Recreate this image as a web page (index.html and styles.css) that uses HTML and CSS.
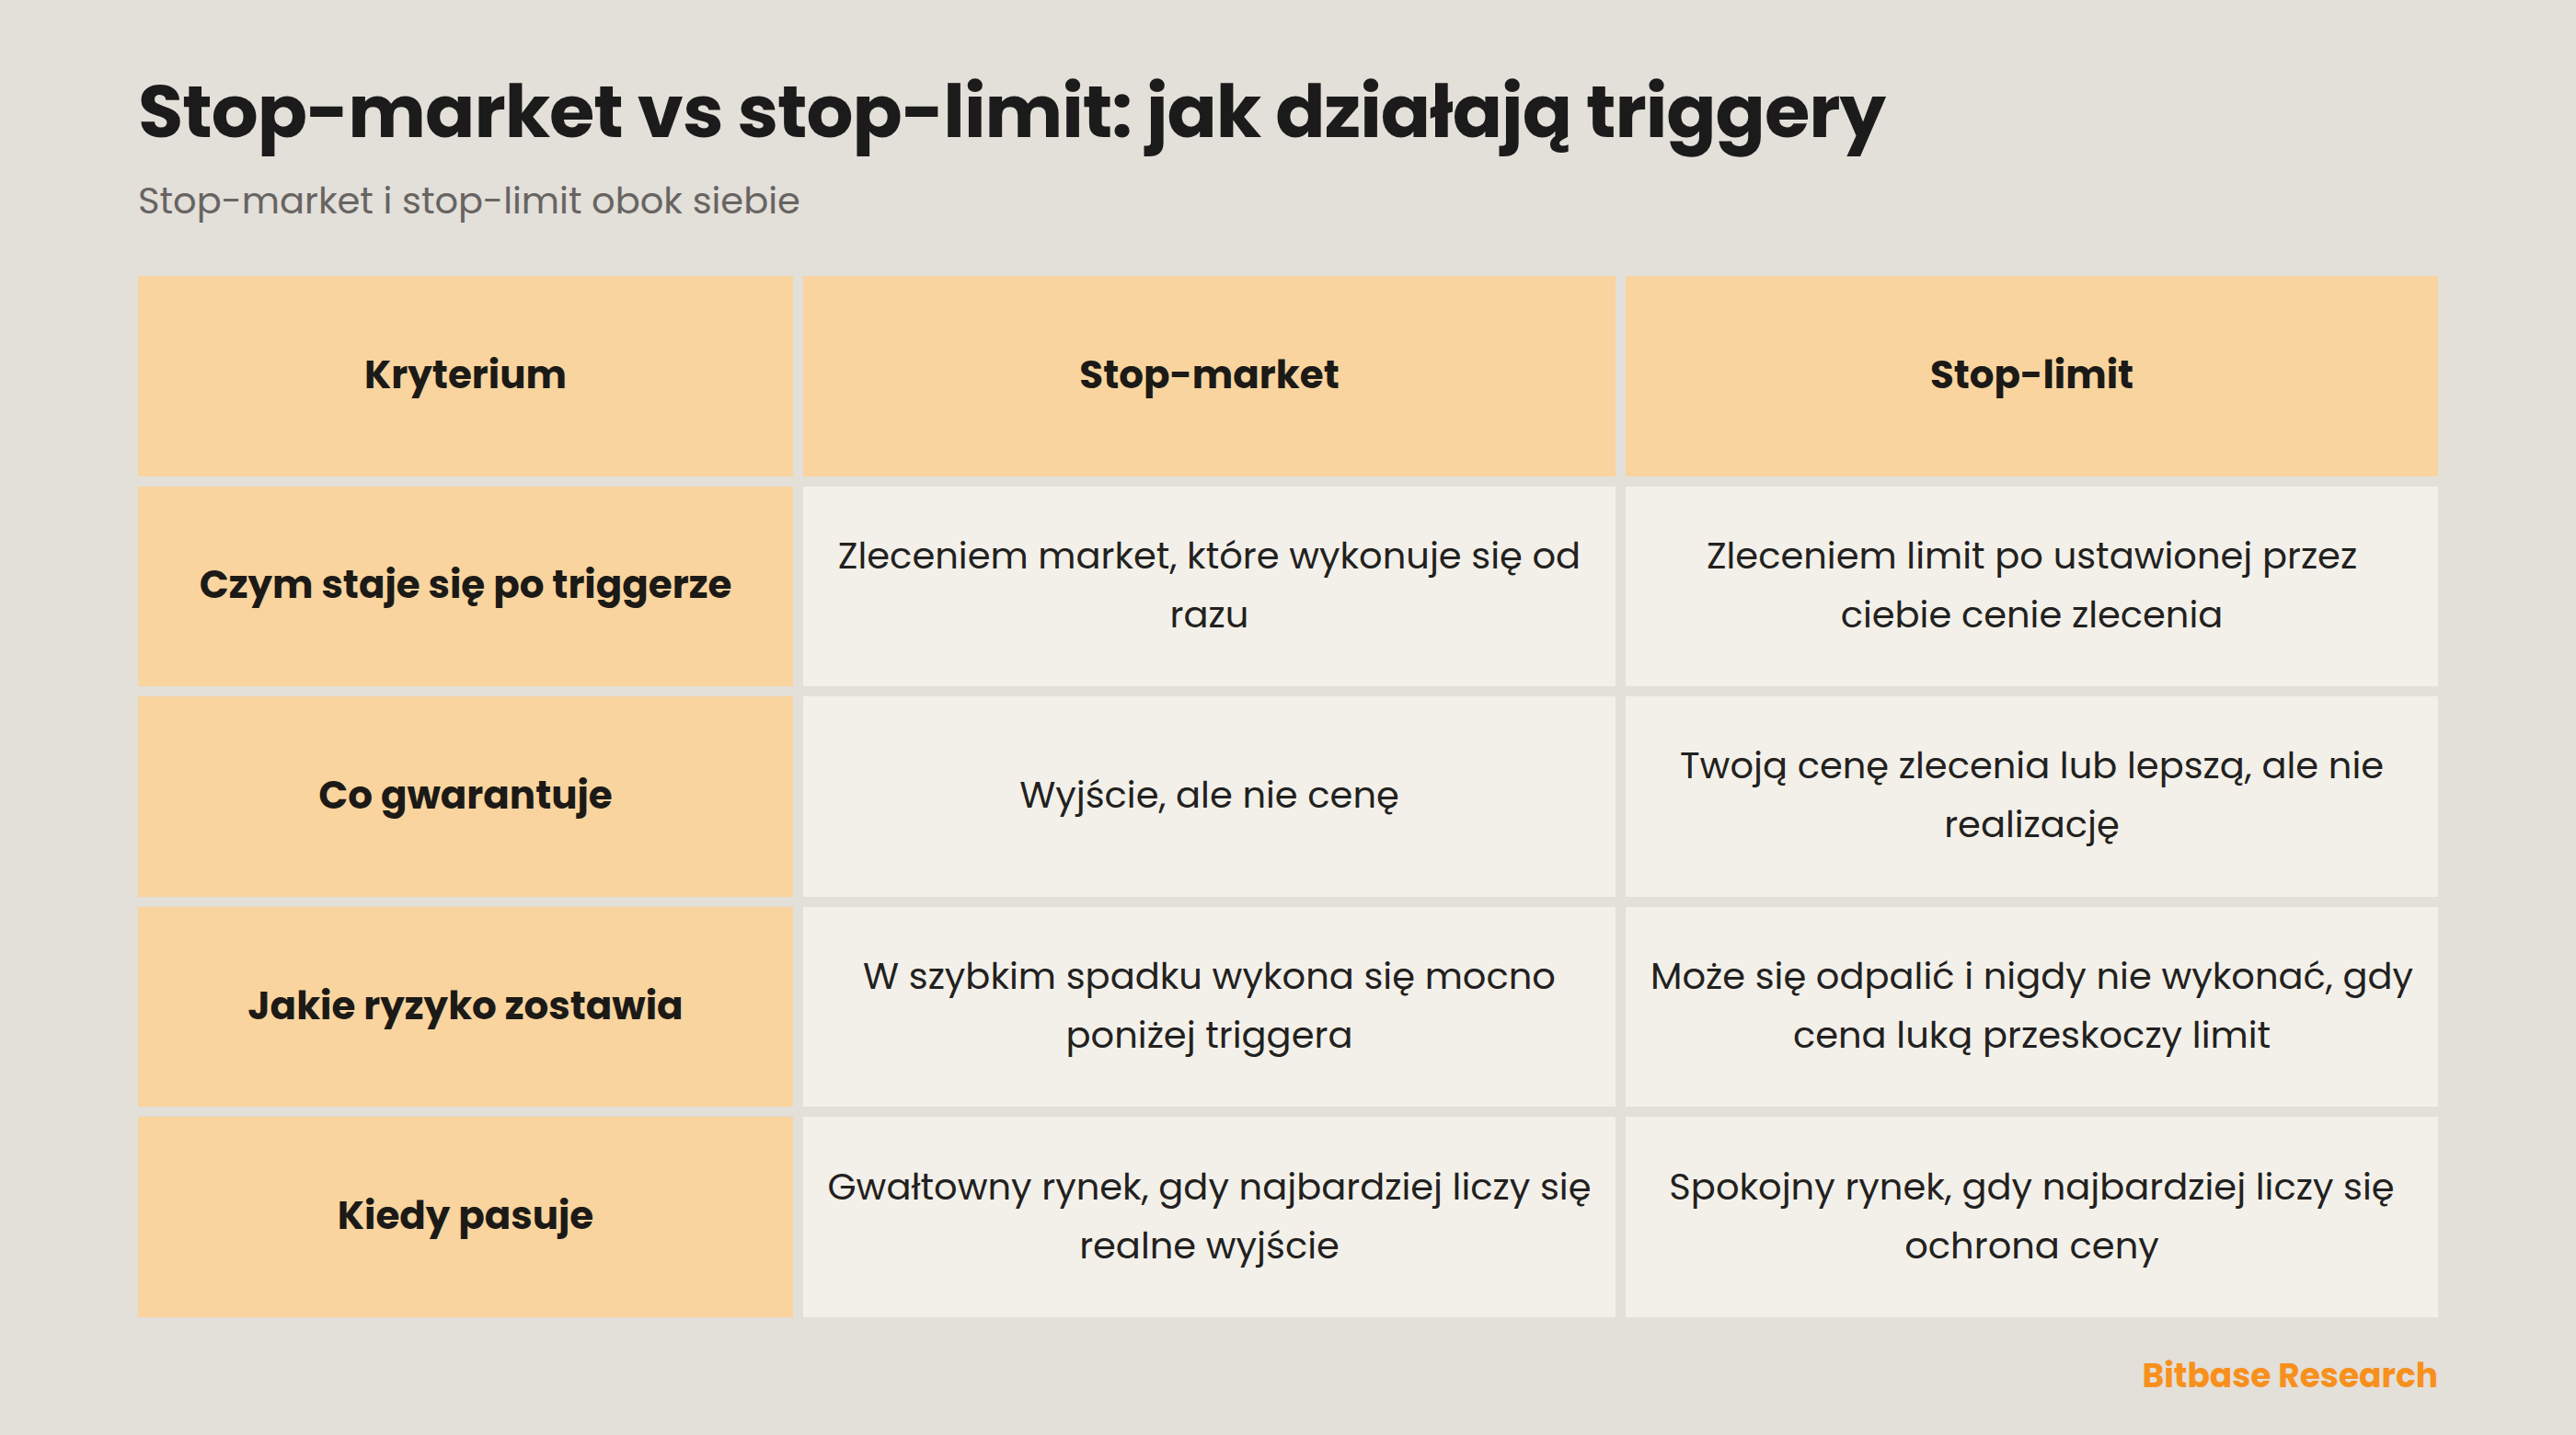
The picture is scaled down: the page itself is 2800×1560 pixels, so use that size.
FILE: index.html
```html
<!DOCTYPE html>
<html lang="pl">
<head>
<meta charset="utf-8">
<title>Stop-market vs stop-limit</title>
<link rel="stylesheet" href="styles.css">
</head>
<body>
<main class="page">
  <h1 class="title">Stop-market vs stop-limit: jak działają triggery</h1>
  <p class="subtitle">Stop-market i stop-limit obok siebie</p>
  <div class="table">
    <div class="cell head">Kryterium</div>
    <div class="cell head">Stop-market</div>
    <div class="cell head">Stop-limit</div>

    <div class="cell label">Czym staje się po triggerze</div>
    <div class="cell body">Zleceniem market, które wykonuje się od razu</div>
    <div class="cell body">Zleceniem limit po ustawionej przez ciebie cenie zlecenia</div>

    <div class="cell label">Co gwarantuje</div>
    <div class="cell body">Wyjście, ale nie cenę</div>
    <div class="cell body">Twoją cenę zlecenia lub lepszą, ale nie realizację</div>

    <div class="cell label">Jakie ryzyko zostawia</div>
    <div class="cell body">W szybkim spadku wykona się mocno poniżej triggera</div>
    <div class="cell body">Może się odpalić i nigdy nie wykonać, gdy cena luką przeskoczy limit</div>

    <div class="cell label">Kiedy pasuje</div>
    <div class="cell body">Gwałtowny rynek, gdy najbardziej liczy się realne wyjście</div>
    <div class="cell body">Spokojny rynek, gdy najbardziej liczy się ochrona ceny</div>
  </div>
  <div class="footer">Bitbase Research</div>
</main>
</body>
</html>
```

FILE: styles.css
```css
html, body {
  margin: 0;
  padding: 0;
}
body {
  background: #e3dfd9;
  font-family: "Poppins", "Inter", "Noto Sans", sans-serif;
  color: #1c1c1c;
  width: 2800px;
  height: 1560px;
  overflow: hidden;
}
.page {
  display: flex;
  flex-direction: column;
  padding: 73px 150px 0 150px;
}
.title {
  margin: 0;
  font-size: 80px;
  line-height: 96px;
  font-weight: 700;
  letter-spacing: -1px;
  color: #1b1b1b;
}
.subtitle {
  margin: 25px 0 0 0;
  font-size: 40px;
  line-height: 48px;
  font-weight: 400;
  color: #676462;
}
.table {
  margin-top: 58px;
  display: grid;
  grid-template-columns: 712px 1fr 1fr;
  grid-template-rows: repeat(5, 1fr);
  gap: 11px;
  height: 1132px;
}
.cell {
  display: flex;
  align-items: center;
  justify-content: center;
  text-align: center;
  padding: 0 24px 3px;
}
.head, .label {
  background: #f9d49e;
  font-weight: 700;
  font-size: 42px;
  color: #1c1a17;
}
.body {
  background: #f3f0e9;
  font-size: 40px;
  line-height: 64px;
  font-weight: 400;
  color: #222120;
}
.footer {
  margin-top: 42px;
  align-self: flex-end;
  font-size: 36px;
  line-height: 44px;
  font-weight: 700;
  color: #f7901c;
}
```
